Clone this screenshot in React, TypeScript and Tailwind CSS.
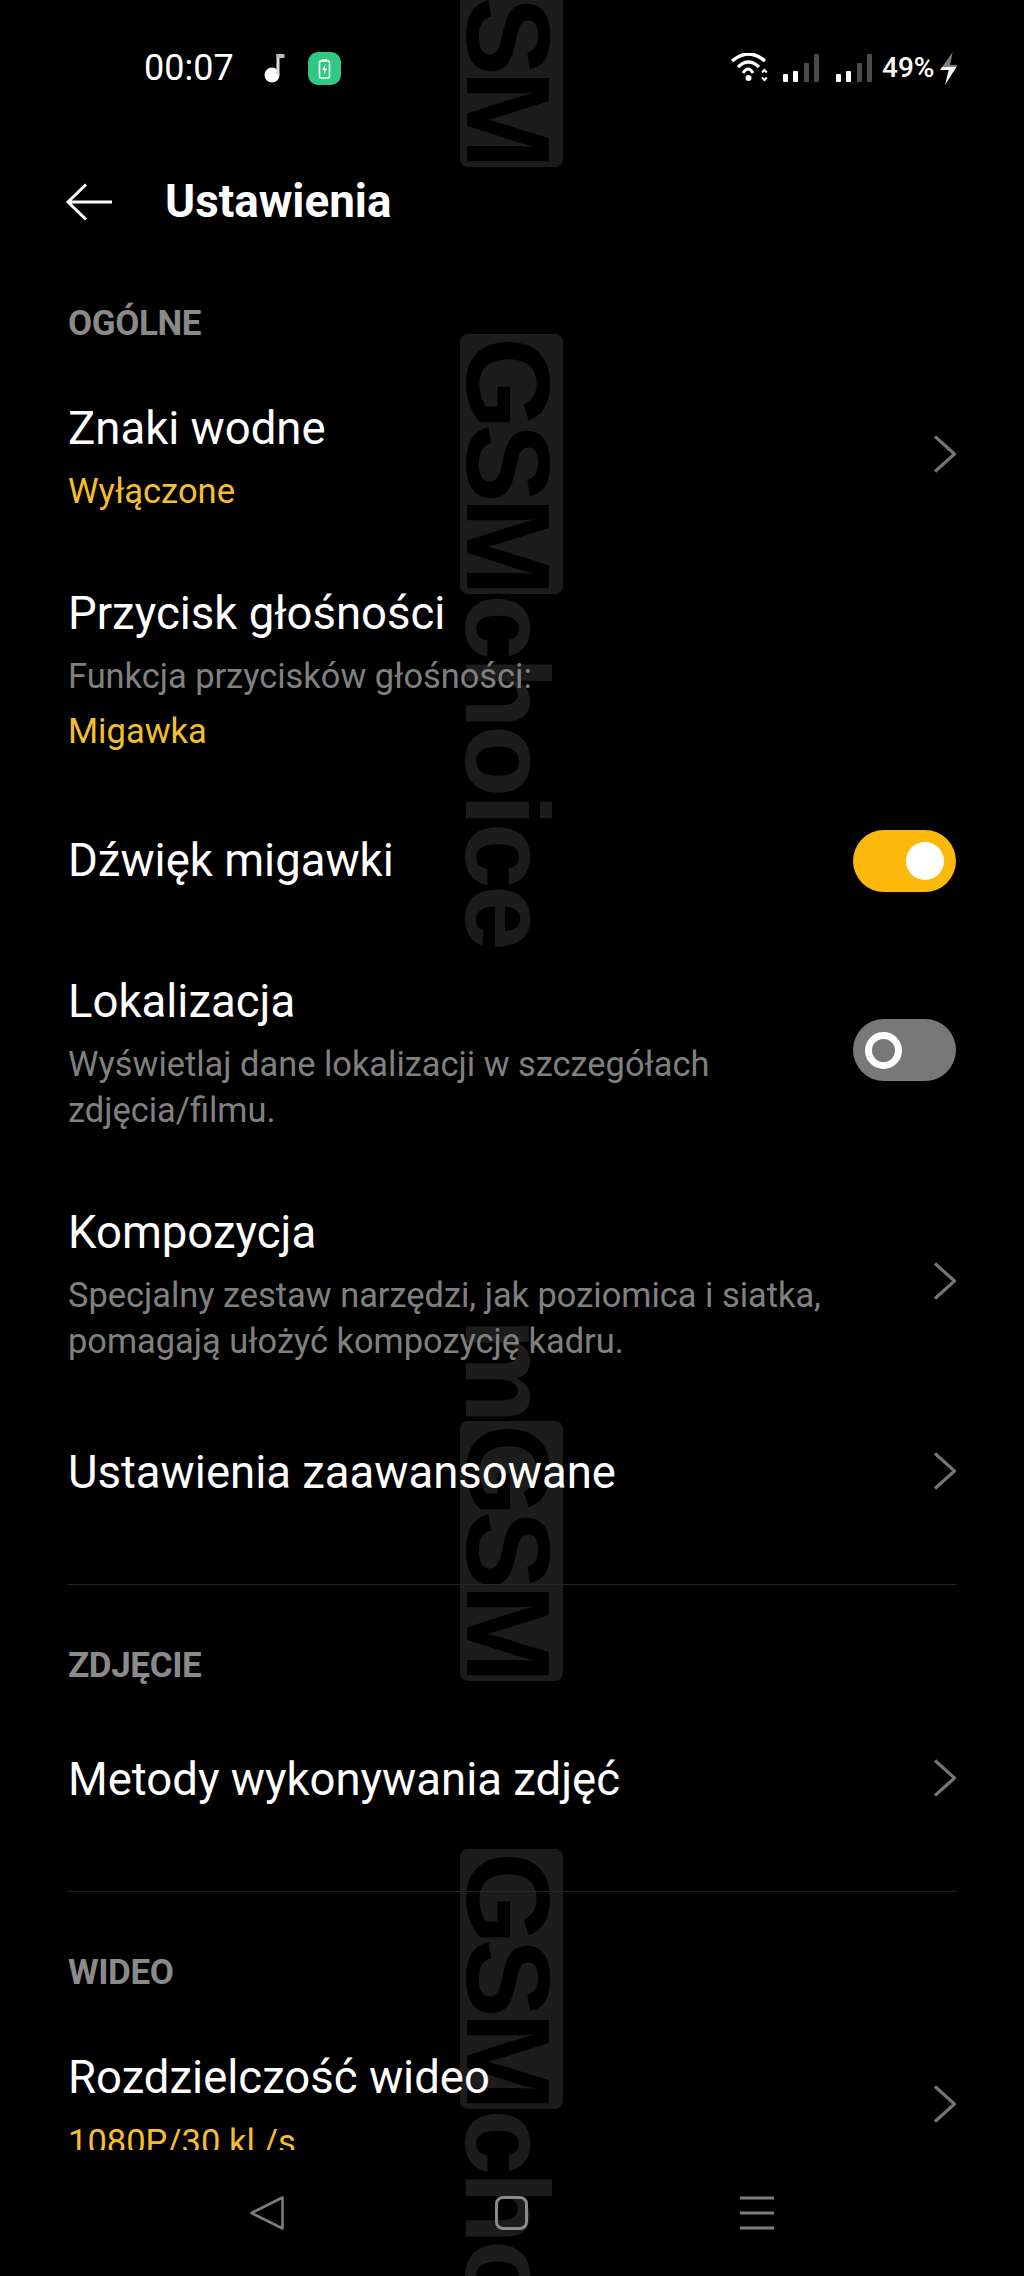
import React from "react";

const font = { fontFamily: "Roboto, sans-serif" };

// the site's stamp sits behind the page, turned on its side
function StampBox({ className = "" }: { className?: string }) {
  return (
    <div className={"w-[103px] h-[260px] shrink-0 rounded-lg bg-[#1c1c1c] flex items-center justify-center pr-[6px] " + className}>
      <span className="[writing-mode:vertical-rl] text-black font-bold text-[119px] leading-none tracking-[-6px] font-['Liberation_Sans',sans-serif] whitespace-nowrap">
        GSM
      </span>
    </div>
  );
}

function StampWord({ text, className = "" }: { text: string; className?: string }) {
  return (
    <div className={"w-[103px] shrink-0 flex justify-center pr-[8px] " + className}>
      <span className="[writing-mode:vertical-rl] text-[#1c1c1c] font-bold text-[119px] leading-none tracking-[-4px] font-['Liberation_Sans',sans-serif] whitespace-nowrap">
        {text}
      </span>
    </div>
  );
}

function Watermark() {
  return (
    <div className="absolute left-[460px] top-[-93px] w-[103px] flex flex-col">
      <StampBox />
      <StampBox className="mt-[167px]" />
      <StampWord text="choice" className="h-[360px]" />
      <StampWord text="m" className="h-[103px] mt-[364px]" />
      <StampBox />
      <StampBox className="mt-[168px]" />
      <StampWord text="cho" className="h-[200px]" />
    </div>
  );
}

function Chevron({ className = "" }: { className?: string }) {
  return (
    <svg viewBox="0 0 22 38" className={"w-[22px] h-[38px] " + className} fill="none" stroke="#757575" strokeWidth="3.2">
      <path d="M1 1.5 L20.5 19 L1 36.5" />
    </svg>
  );
}

function Toggle({ on, className = "" }: { on: boolean; className?: string }) {
  if (on) {
    return (
      <div className={"w-[103px] h-[62px] rounded-full bg-[#fdb90b] flex items-center justify-end pr-[12px] " + className}>
        <div className="w-[38px] h-[38px] rounded-full bg-white" />
      </div>
    );
  }
  return (
    <div className={"w-[103px] h-[62px] rounded-full bg-[#787878] flex items-center pl-[12px] " + className}>
      <div className="w-[37px] h-[37px] rounded-full border-[7px] border-white" />
    </div>
  );
}

function SectionLabel({ children, className = "" }: { children: React.ReactNode; className?: string }) {
  return <div className={"pl-[68px] h-[40px] leading-[40px] text-[35px] font-bold text-[#8a8a8a] tracking-[-0.4px] " + className}>{children}</div>;
}

type RowProps = {
  title: string;
  desc?: string[];
  value?: string;
  valueGap?: string;
  right?: React.ReactNode;
  className?: string;
};

function Row({ title, desc, value, valueGap = "mt-[13px]", right, className = "" }: RowProps) {
  return (
    <div className={"flex items-center justify-between pl-[68px] pr-[68px] " + className}>
      <div className="flex-1">
        <div className="text-[45.5px] leading-[52px] text-white">{title}</div>
        {desc && (
          <div className="mt-[13px] text-[34.4px] leading-[46px] text-[#808080]">
            {desc.map((line) => (
              <div key={line}>{line}</div>
            ))}
          </div>
        )}
        {value && <div className={"text-[34.5px] leading-[46px] text-[#f4bf2e] " + valueGap}>{value}</div>}
      </div>
      {right}
    </div>
  );
}

function StatusBars() {
  return (
    <svg viewBox="0 0 36 28" className="w-[36px] h-[28px]">
      <rect x="0" y="20" width="5" height="8" rx="1" fill="#fff" />
      <rect x="10" y="17" width="5" height="11" rx="1" fill="#fff" />
      <rect x="21" y="9" width="5" height="19" rx="1" fill="#4a4a4a" />
      <rect x="31" y="0" width="5" height="28" rx="1" fill="#4a4a4a" />
    </svg>
  );
}

function StatusBar() {
  return (
    <div className="h-[136px] mb-px flex items-center justify-between pl-[144px] pr-[66px] text-white">
      <div className="flex items-center">
        <span className="text-[36px] w-[88px] leading-none">00:07</span>
        <svg viewBox="0 0 22 32" className="w-[22px] h-[32px] ml-[32px]">
          <circle cx="8" cy="23" r="7.5" fill="#fff" />
          <rect x="12.5" y="2" width="3" height="21" fill="#ddd" />
          <rect x="12.5" y="2" width="8" height="4" fill="#bbb" />
        </svg>
        <svg viewBox="0 0 33 33" className="w-[33px] h-[33px] ml-[22px]">
          <rect width="33" height="33" rx="10" fill="#2fc985" />
          <rect x="11.5" y="9" width="10" height="17" rx="1.5" fill="none" stroke="#fff" strokeWidth="1.6" />
          <rect x="14" y="7" width="5" height="2" fill="#fff" />
          <path d="M17.5 12 L14 18 H16.5 L15.5 23 L19 16.5 H16.5 Z" fill="#fff" />
        </svg>
      </div>
      <div className="flex items-center">
        <svg viewBox="0 0 38 30" className="w-[38px] h-[30px]" fill="none" stroke="#fff">
          <path d="M1 8 Q17.5 -6 34 8" strokeWidth="3.5" />
          <path d="M7 14 Q17.5 4 28 14" strokeWidth="3.5" />
          <path d="M12 20 Q17.5 12 22 20" strokeWidth="3" />
          <circle cx="17.5" cy="25" r="3" fill="#fff" stroke="none" />
          <path d="M31 19.5 L33.4 17 L35.8 19.5" strokeWidth="2" />
          <path d="M31 24.5 L33.4 27 L35.8 24.5" strokeWidth="2" />
        </svg>
        <div className="ml-[14px]">
          <StatusBars />
        </div>
        <div className="ml-[17px]">
          <StatusBars />
        </div>
        <span className="ml-[10px] text-[28px] font-medium leading-none w-[52px] whitespace-nowrap">49%</span>
        <svg viewBox="0 0 18 33" className="w-[18px] h-[33px] ml-[6px]">
          <defs>
            <linearGradient id="bolt" x1="0" y1="0" x2="0" y2="1">
              <stop offset="0.45" stopColor="#7d7d7d" />
              <stop offset="0.45" stopColor="#ffffff" />
            </linearGradient>
          </defs>
          <path d="M12.7 0 L0 18 H8.7 L5 33 L17.7 13 H10 Z" fill="url(#bolt)" />
        </svg>
      </div>
    </div>
  );
}

function NavBar() {
  return (
    <div className="relative z-10 h-[126px] pt-[46px] flex items-start pl-[250px]">
      <svg viewBox="0 0 34 34" className="w-[34px] h-[34px]" fill="none" stroke="#7c7c7c" strokeWidth="2.6" strokeLinejoin="round">
        <path d="M32.5 1.5 V32.5 L1.5 17 Z" />
      </svg>
      <div className="ml-[211px] w-[33px] h-[34px] rounded-lg border-[3px] border-[#8a8a8a]" />
      <svg viewBox="0 0 34 34" className="ml-[212px] w-[34px] h-[34px]" stroke="#7c7c7c" strokeWidth="3">
        <path d="M0 2 H34 M0 17 H34 M0 32 H34" />
      </svg>
    </div>
  );
}

export default function App() {
  return (
    <div className="relative w-[1024px] h-[2276px] overflow-hidden bg-black" style={font}>
      <Watermark />
      <div className="relative z-10 h-[2150px] overflow-hidden">
        <StatusBar />

        <div className="h-[130px] flex items-center pl-[65px]">
          <svg viewBox="0 0 48 38" className="w-[48px] h-[38px]" fill="none" stroke="#fff" strokeWidth="3">
            <path d="M47 19 H3 M21 1.5 L3 19 L21 36.5" />
          </svg>
          <h1 className="ml-[52px] text-[45.8px] leading-none font-bold text-white">Ustawienia</h1>
        </div>

        <SectionLabel className="mt-[37px]">OGÓLNE</SectionLabel>
        <Row className="mt-[59px]" title="Znaki wodne" value="Wyłączone" right={<Chevron className="mb-[10px]" />} />
        <Row className="mt-[74px]" title="Przycisk głośności" desc={["Funkcja przycisków głośności:"]} value="Migawka" valueGap="mt-[9px]" />
        <Row className="mt-[76px]" title="Dźwięk migawki" right={<Toggle on />} />
        <Row
          className="mt-[84px]"
          title="Lokalizacja"
          desc={["Wyświetlaj dane lokalizacji w szczegółach", "zdjęcia/filmu."]}
          right={<Toggle on={false} className="mb-[9px]" />}
        />
        <Row
          className="mt-[74px]"
          title="Kompozycja"
          desc={["Specjalny zestaw narzędzi, jak poziomica i siatka,", "pomagają ułożyć kompozycję kadru."]}
          right={<Chevron className="mb-[10px]" />}
        />
        <Row className="mt-[83px]" title="Ustawienia zaawansowane" right={<Chevron className="mb-[4px]" />} />

        <div className="mx-[68px] mt-[85px] h-px bg-[#242424]" />
        <SectionLabel className="mt-[61px]">ZDJĘCIE</SectionLabel>
        <Row className="mt-[68px]" title="Metody wykonywania zdjęć" right={<Chevron className="mb-[4px]" />} />

        <div className="mx-[68px] mt-[85px] h-px bg-[#242424]" />
        <SectionLabel className="mt-[61px]">WIDEO</SectionLabel>
        <Row className="mt-[59px]" title="Rozdzielczość wideo" value="1080P/30 kl./s" valueGap="mt-[15px]" right={<Chevron className="mb-[10px]" />} />
      </div>
      <NavBar />
    </div>
  );
}
